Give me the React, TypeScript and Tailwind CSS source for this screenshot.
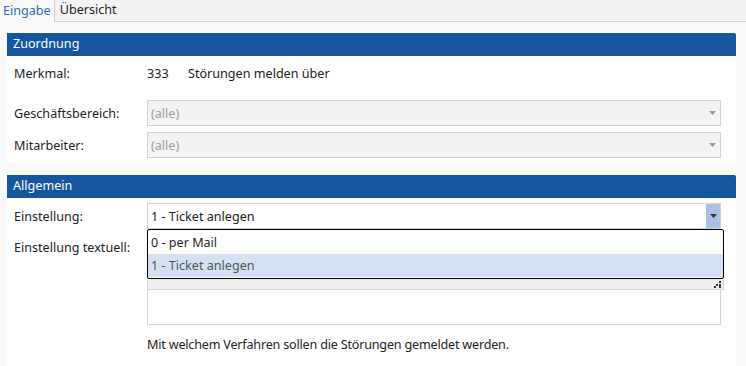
import React from "react";

const Caret = ({ className }: { className: string }) => (
  <svg width="7" height="4" viewBox="0 0 7 4" className={className}>
    <path d="M0 0h7L3.5 4z" fill="currentColor" />
  </svg>
);

const Grip = () => (
  <svg width="7" height="7" viewBox="0 0 7 7" className="text-[#333]">
    <rect x="5" y="0" width="2" height="2" fill="currentColor" />
    <rect x="2" y="3" width="2" height="2" fill="currentColor" />
    <rect x="5" y="3" width="2" height="2" fill="currentColor" />
    <rect x="0" y="5" width="2" height="2" fill="currentColor" />
    <rect x="5" y="5" width="2" height="2" fill="currentColor" />
  </svg>
);

const SectionHeader = ({ title }: { title: string }) => (
  <div className="h-[23px] bg-[#15569f] text-white flex items-center px-[6px] rounded-tr-[2px]">
    {title}
  </div>
);

const DisabledSelect = () => (
  <div className="h-[26px] flex-1 flex items-center justify-between bg-[#f3f3f3] border border-[#d4d4d4] pl-[3px] pr-[4px] text-[#a0a0a0]">
    <span className="pt-[3px]">(alle)</span>
    <Caret className="text-[#9a9a9a]" />
  </div>
);

export default function App() {
  return (
    <div className="w-[746px] h-[366px] overflow-hidden bg-[#f9f9f9] text-[12.6px] text-[#222] font-['Segoe_UI','Noto_Sans',sans-serif]">
      {/* Tabs */}
      <div className="h-[22px] flex bg-[#f3f3f3]">
        <div className="px-[3px] flex items-center bg-[#f9f9f9] text-[#2b6cb5] border-r border-[#d0d0d0]">
          Eingabe
        </div>
        <div className="flex-1 flex items-center pl-[5px] border-b border-[#d2d2d2] text-[#1f1f1f]">
          Übersicht
        </div>
      </div>

      <div className="pl-[7px] pr-[10px] pt-[11px]">
        {/* Zuordnung */}
        <div className="bg-white rounded-[2px] pb-[5px]">
          <SectionHeader title="Zuordnung" />
          <div className="pl-[7px] pr-[15px] pt-[4px]">
            <div className="h-[26px] flex items-center pt-[3px]">
              <div className="w-[133px]">Merkmal:</div>
              <div className="w-[41px]">333</div>
              <div>Störungen melden über</div>
            </div>
            <div className="h-[26px] mt-[14px] flex items-center">
              <div className="w-[133px] pt-[3px]">Geschäftsbereich:</div>
              <DisabledSelect />
            </div>
            <div className="h-[26px] mt-[6px] flex items-center">
              <div className="w-[133px] pt-[3px]">Mitarbeiter:</div>
              <DisabledSelect />
            </div>
          </div>
        </div>

        {/* Allgemein */}
        <div className="bg-white rounded-[2px] mt-[12px] h-[200px]">
          <SectionHeader title="Allgemein" />
          <div className="pl-[7px] pr-[15px] pt-[5px]">
            <div className="h-[26px] flex items-center">
              <div className="w-[133px] pt-[3px]">Einstellung:</div>
              <div className="relative flex-1 h-[26px] flex items-stretch bg-white border border-[#d0d0d0]">
                <div className="flex-1 flex items-center pl-[3px] pt-[2px]">1 - Ticket anlegen</div>
                <div className="w-[14px] bg-[#a9c1e6] flex items-center justify-center">
                  <Caret className="text-[#333]" />
                </div>
                {/* Dropdown popup */}
                <div className="absolute left-[-1px] right-[-4px] top-[25px] z-10">
                  <div className="bg-white border border-black rounded-[2px] pt-px pb-px">
                    <div className="h-[23px] flex items-center pl-[3px] pt-[2px] text-[#1f1f1f]">0 - per Mail</div>
                    <div className="h-[23px] flex items-center pl-[3px] pt-[2px] bg-[#d5e0f2] text-[#555]">1 - Ticket anlegen</div>
                  </div>
                  <div className="h-[11px] bg-[#efefef] border-x border-b border-[#d6d6d6] flex justify-end items-center pr-[2px]">
                    <Grip />
                  </div>
                </div>
              </div>
            </div>
            <div className="flex mt-[6px]">
              <div className="w-[133px] pt-[4px]">Einstellung textuell:</div>
              <div className="flex-1 h-[90px] bg-white border border-[#d4d4d4]" />
            </div>
            <div className="pl-[133px] mt-[11px] text-[#222] tracking-[-0.2px]">
              Mit welchem Verfahren sollen die Störungen gemeldet werden.
            </div>
          </div>
        </div>
      </div>
    </div>
  );
}
